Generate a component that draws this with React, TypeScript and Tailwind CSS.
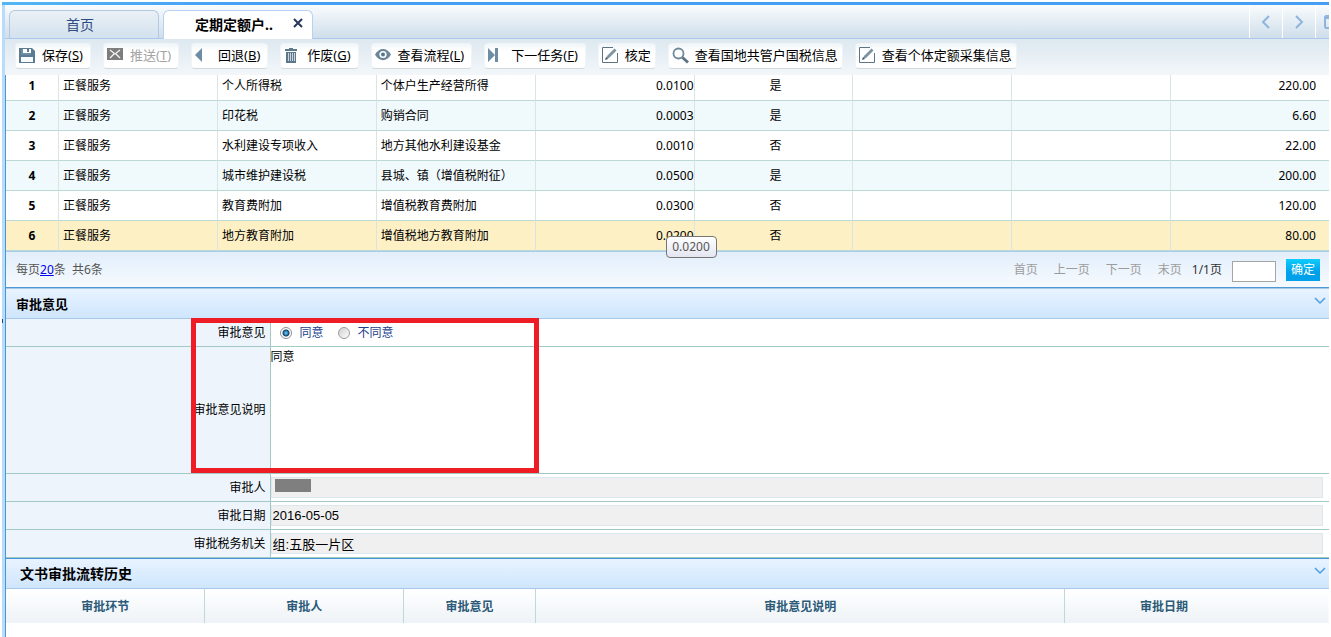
import type { ReactNode } from "react";

const taxRows = [
  { id: 1, item: "正餐服务", tax: "个人所得税", detail: "个体户生产经营所得", rate: "0.0100", flag: "是", amount: "220.00" },
  { id: 2, item: "正餐服务", tax: "印花税", detail: "购销合同", rate: "0.0003", flag: "是", amount: "6.60" },
  { id: 3, item: "正餐服务", tax: "水利建设专项收入", detail: "地方其他水利建设基金", rate: "0.0010", flag: "否", amount: "22.00" },
  { id: 4, item: "正餐服务", tax: "城市维护建设税", detail: "县城、镇（增值税附征）", rate: "0.0500", flag: "是", amount: "200.00" },
  { id: 5, item: "正餐服务", tax: "教育费附加", detail: "增值税教育费附加", rate: "0.0300", flag: "否", amount: "120.00" },
  { id: 6, item: "正餐服务", tax: "地方教育附加", detail: "增值税地方教育附加", rate: "0.0200", flag: "否", amount: "80.00" },
];

const icons: Record<string, ReactNode> = {
  save: (
    <svg width="17" height="17" viewBox="0 0 17 17">
      <path d="M0 1h13l3 3v12H0z" fill="#5b7b92" />
      <path d="M2 2h10v6H2z" fill="#6d8ca1" />
      <path d="M4 2h8v4H4z" fill="#fff" />
      <path d="M8 2h2v3H8z" fill="#5b7b92" />
      <path d="M2 10h12v5H2z" fill="#f7fafc" />
    </svg>
  ),
  mail: (
    <svg width="17" height="17" viewBox="0 0 17 17">
      <path d="M0 1h16v12H0z" fill="#7d7d7d" />
      <path d="M3 3l5 4 5-4M3 11l4-4M13 11L9 7" stroke="#f5f5f5" strokeWidth="1.300" fill="none" />
    </svg>
  ),
  back: (
    <svg width="17" height="17" viewBox="0 0 17 17">
      <path d="M7 1v14L0 8z" fill="#6c8da3" />
    </svg>
  ),
  trash: (
    <svg width="17" height="17" viewBox="0 0 17 17">
      <path d="M5 2V1h4v1h4v2H1V2zM2 5h10v11H2z" fill="#5d788b" />
      <path d="M4.500 6v8M6.500 6v8M8.500 6v8M10.500 6v8" stroke="#e6eef3" strokeWidth=".8" />
    </svg>
  ),
  eye: (
    <svg width="17" height="17" viewBox="0 0 17 17">
      <path d="M0 7.500C4 0 12 0 16 7.500C12 15 4 15 0 7.500z" fill="#6b8699" />
      <circle cx="8" cy="7.500" r="3.600" fill="#fff" />
      <circle cx="8" cy="7.500" r="2" fill="#58758a" />
    </svg>
  ),
  next: (
    <svg width="17" height="17" viewBox="0 0 17 17">
      <path d="M0 1l7 7-7 7zM7 1h3v14H7z" fill="#6c8da3" />
    </svg>
  ),
  edit: (
    <svg width="17" height="17" viewBox="0 0 17 17" fill="none">
      <path d="M11 .5H.500v15h15V6" stroke="#5f7482" />
      <path d="M4 12l1-3L12.500 1.500l2 2L7 11z" fill="#7d93a1" />
      <path d="M3 13l1-3 2 2z" fill="#3f5564" />
    </svg>
  ),
  search: (
    <svg width="18" height="17" viewBox="0 0 18 17" fill="none">
      <circle cx="6.500" cy="6.500" r="5" stroke="#70899a" strokeWidth="1.800" />
      <path d="M10.500 10.500L16 15.500" stroke="#5c7485" strokeWidth="3" />
    </svg>
  ),
};

const actions = [
  { icon: "save", label: "保存", hotkey: "S" },
  { icon: "mail", label: "推送", hotkey: "T", disabled: true },
  { icon: "back", label: "回退", hotkey: "B" },
  { icon: "trash", label: "作废", hotkey: "G" },
  { icon: "eye", label: "查看流程", hotkey: "L" },
  { icon: "next", label: "下一任务", hotkey: "F" },
  { icon: "edit", label: "核定" },
  { icon: "search", label: "查看国地共管户国税信息" },
  { icon: "edit", label: "查看个体定额采集信息" },
];

function Chevron({ path }: { path: string }) {
  return (
    <svg width="12" height="14" viewBox="0 0 12 14" fill="none">
      <path d={path} stroke="currentColor" strokeWidth="2" />
    </svg>
  );
}

function TabBar() {
  return (
    <div className="flex h-[34px] justify-between border-b border-[#abc9ec] bg-linear-to-b from-[#f9fcfd] to-[#cfdeeb]">
      <div className="flex items-end gap-1 pl-1">
        <button className="h-[28px] w-[150px] rounded-t-md border border-b-0 border-[#b4c8dd] bg-linear-to-b from-[#eaf1f6] to-[#d3e1ee] pr-2 text-sm leading-5 text-[#2f4a80]">
          首页
        </button>
        <div className="-mb-px flex h-[29px] w-[150px] items-center justify-between rounded-t-md border border-b-0 border-[#b7d1f3] bg-white pr-2 pl-[31px] text-sm leading-5 font-bold">
          <span>定期定额户..</span>
          <button aria-label="关闭" className="flex w-3 justify-center pb-1">
            <svg width="10" height="10" viewBox="0 0 10 10">
              <path d="M1 1l8 8M9 1L1 9" stroke="#27375b" strokeWidth="2" />
            </svg>
          </button>
        </div>
      </div>
      <div className="flex text-[#8fb5dd]">
        <button aria-label="向左" className="flex w-[33px] items-center justify-center border-l border-white">
          <Chevron path="M9 1L3 7l6 6" />
        </button>
        <button aria-label="向右" className="flex w-[33px] items-center justify-center border-l border-white">
          <Chevron path="M3 1l6 6-6 6" />
        </button>
        <button aria-label="窗口" className="flex w-[14px] items-center justify-end overflow-hidden border-l border-white">
          <svg width="5" height="14" viewBox="0 0 5 14" fill="none">
            <path d="M5 1H2L1 2v10l1 1h3M1 3h4" stroke="currentColor" strokeWidth="2" />
          </svg>
        </button>
      </div>
    </div>
  );
}

function Toolbar() {
  return (
    <div className="relative z-10 flex h-9 items-center gap-3 bg-linear-to-b from-[#dde8f0] to-[#f3f7fa] pb-[2px] pl-[10px]">
      {actions.map((a) => (
        <button
          key={a.label}
          disabled={a.disabled}
          className="flex h-[26px] shrink-0 items-center gap-[5px] rounded-sm border border-[#f0f4f7] border-b-[#d3dade] bg-linear-to-b from-[#f1f6f9] to-white to-30% pr-1 pb-[2px] pl-[3px] text-[13px] leading-5 whitespace-nowrap disabled:text-[#a3a3a3]"
        >
          <span className="flex w-[18px]">{icons[a.icon]}</span>
          {a.hotkey ? (
            <span className="pr-[3px]">
              {a.label}(<u>{a.hotkey}</u>)
            </span>
          ) : (
            <span>{a.label}</span>
          )}
        </button>
      ))}
    </div>
  );
}

function TaxTable() {
  return (
    <table className="-mt-1 w-full table-fixed border-separate border-spacing-0">
      <colgroup>
        <col className="w-[52px]" />
        <col span={8} />
      </colgroup>
      <tbody>
        {taxRows.map((row) => (
          <tr
            key={row.id}
            className={
              (row.id === 6 ? "bg-[#fef0c5]" : "even:bg-[#f0f9fc]") +
              " h-[30px] [&>*]:border-b [&>*]:border-b-[#bbd9d5] [&>td]:border-l [&>td]:border-l-[#d9e5e2]"
            }
          >
            <th>{row.id}</th>
            <td className="pl-1">{row.item}</td>
            <td className="pl-1">{row.tax}</td>
            <td className="pl-1">{row.detail}</td>
            <td className="relative text-right">
              {row.rate}
              {row.id === 6 && (
                <span
                  role="tooltip"
                  className="absolute top-[15px] -right-[23px] z-10 h-[22px] w-[51px] rounded-sm border border-[#767676] bg-linear-to-b from-white to-[#e4e5f0] text-center leading-5 text-[#575757]"
                >
                  0.0200
                </span>
              )}
            </td>
            <td className="pl-1 text-center">{row.flag}</td>
            <td></td>
            <td></td>
            <td className="pr-[13px] text-right">{row.amount}</td>
          </tr>
        ))}
      </tbody>
    </table>
  );
}

function Pager() {
  return (
    <div className="flex h-[37px] items-center justify-between border-t border-b border-t-[#aacbe8] border-b-[#4d99d6] bg-linear-to-b from-[#e2eefb] to-[#f6fafe] pr-[9px] pl-[10px] text-[#555]">
      <div>
        每页
        <a href="#" className="text-[#0000ee] underline">
          20
        </a>
        条&nbsp; 共6条
      </div>
      <div className="flex items-center gap-[10px]">
        <div className="flex gap-4 text-[#9c9c9c]">
          <button>首页</button>
          <button>上一页</button>
          <button>下一页</button>
          <button>末页</button>
        </div>
        <span className="text-[#333]">1/1页</span>
        <input aria-label="页码" className="mt-1 h-[21px] w-11 border border-[#a5a5a5] bg-white px-1" />
        <button className="h-[22px] w-[34px] bg-linear-to-b from-[#11ccfc] to-[#00a1ea] to-60% text-white">
          确定
        </button>
      </div>
    </div>
  );
}

function SectionTitle({ children, className }: { children: ReactNode; className: string }) {
  return (
    <div
      className={
        "flex h-[31px] items-center justify-between border-t border-b border-b-[#a7c8e8] bg-linear-to-b from-[#e8f3ff] to-[#cfe6fd] pr-[3px] font-bold " +
        className
      }
    >
      <h2>{children}</h2>
      <button aria-label="收起" className="mb-[6px] text-[#4a9de0]">
        <svg width="12" height="8" viewBox="0 0 12 8" fill="none">
          <path d="M1 1l5 5 5-5" stroke="currentColor" strokeWidth="1.500" />
        </svg>
      </button>
    </div>
  );
}

function FormRow({ label, id, children }: { label: string; id: string; children: ReactNode }) {
  return (
    <div className="grid grid-cols-[20%_1fr] border-b border-[#a3c9c5]">
      <label
        htmlFor={id}
        className="flex items-center justify-end border-r border-[#a3c9c5] bg-[#edf4fc] pr-1"
      >
        {label}
      </label>
      <div className="relative min-h-[27px]">{children}</div>
    </div>
  );
}

function ReadOnlyField({ id, value }: { id: string; value: string }) {
  return (
    <div className="py-[3px] pr-[6px]">
      <input
        id={id}
        readOnly
        defaultValue={value}
        className="block h-[21px] w-full border border-[#dde7ee] bg-[#f0f0f0] px-px font-['Liberation_Sans','Noto_Sans_CJK_SC',sans-serif] text-[13px]"
      />
    </div>
  );
}

function ApprovalForm() {
  return (
    <form className="relative">
      <FormRow label="审批意见" id="agree">
        <div className="flex h-[27px] items-center gap-[14px] pl-[9px] text-[#1b3f8c]">
          <label className="flex items-center gap-2">
            <input
              id="agree"
              type="radio"
              name="opinion"
              defaultChecked
              className="size-3 appearance-none rounded-full border border-[#8c8f94] bg-[radial-gradient(circle,#4fb4e6_0_1px,#123f66_3px,#fff_4px)]"
            />
            同意
          </label>
          <label className="flex items-center gap-2">
            <input
              type="radio"
              name="opinion"
              className="size-3 appearance-none rounded-full border border-[#9b9b9b] bg-linear-to-br from-[#cfcfcf] to-white"
            />
            不同意
          </label>
        </div>
      </FormRow>
      <FormRow label="审批意见说明" id="remark">
        <textarea
          id="remark"
          defaultValue="同意"
          className="block h-[126px] w-full resize-none pt-px leading-[18px] outline-none"
        />
      </FormRow>
      <FormRow label="审批人" id="approver">
        <ReadOnlyField id="approver" value="" />
        <span className="absolute top-[5px] left-1 h-[13px] w-9 bg-[#7f7f7f]" />
      </FormRow>
      <FormRow label="审批日期" id="date">
        <ReadOnlyField id="date" value="2016-05-05" />
      </FormRow>
      <FormRow label="审批税务机关" id="office">
        <ReadOnlyField id="office" value="组:五股一片区" />
      </FormRow>
      {/* highlight frame over the opinion fields */}
      <div className="pointer-events-none absolute -top-px left-[185px] h-[155px] w-[348px] border-[5px] border-[#ee1c25]" />
    </form>
  );
}

function HistoryTable() {
  return (
    <table className="w-full table-fixed border-separate border-spacing-0">
      <colgroup>
        <col className="w-[15%]" />
        <col className="w-[15%]" />
        <col className="w-[10%]" />
        <col className="w-[40%]" />
        <col className="w-[20%]" />
      </colgroup>
      <thead>
        <tr className="h-[34px] bg-linear-to-b from-white to-[#eef3f7] text-[#2c5a78] [&>th]:border-l [&>th]:border-[#bedad6] [&>th]:pt-[2px] [&>th:first-child]:border-l-0">
          <th>审批环节</th>
          <th>审批人</th>
          <th>审批意见</th>
          <th>审批意见说明</th>
          <th className="pr-[5%]">审批日期</th>
        </tr>
      </thead>
    </table>
  );
}

export default function App() {
  return (
    <div className="flex min-h-screen flex-col bg-white px-[2px] pt-[2px] font-['Noto_Sans','Noto_Sans_CJK_SC',sans-serif] text-xs leading-[18px] text-black">
      <div className="h-[3px] bg-linear-to-r from-[#52b5f5] to-[#459df5] to-20%" />
      <div className="flex flex-1">
        <div className="flex w-[3px] shrink-0 items-center bg-[#b9dcfb]">
          <span className="h-1 w-px bg-[#1f4f80]" />
        </div>
        <div className="flex min-w-0 flex-1 flex-col">
          <TabBar />
          <Toolbar />
          <div className="flex-1 border-l border-[#4a97d8]">
            <TaxTable />
            <Pager />
            <SectionTitle className="border-t-[#a7c8e8] pl-[10px] text-[13px]">审批意见</SectionTitle>
            <ApprovalForm />
            <SectionTitle className="border-t-[#4595d6] pl-[14px] text-sm">文书审批流转历史</SectionTitle>
            <HistoryTable />
          </div>
        </div>
      </div>
    </div>
  );
}
